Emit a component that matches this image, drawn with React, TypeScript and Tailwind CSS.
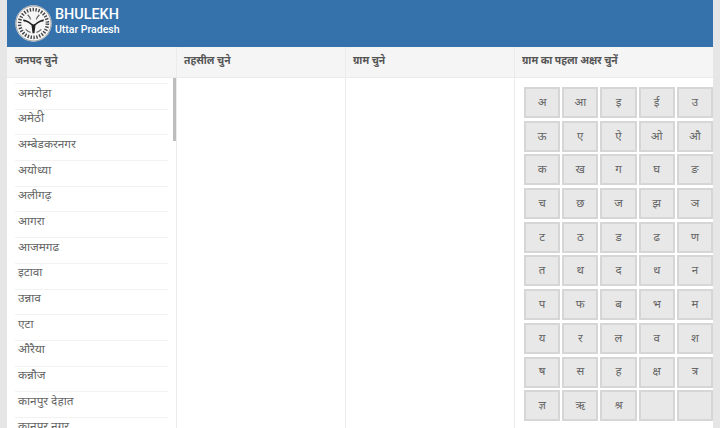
const districts = ["अमरोहा","अमेठी","अम्बेडकरनगर","अयोध्या","अलीगढ़","आगरा","आजमगढ","इटावा","उन्नाव","एटा","औरैया","कन्नौज","कानपुर देहात","कानपुर नगर"];
const letters = ["अ","आ","इ","ई","उ","ऊ","ए","ऐ","ओ","औ","क","ख","ग","घ","ङ","च","छ","ज","झ","ञ","ट","ठ","ड","ढ","ण","त","थ","द","ध","न","प","फ","ब","भ","म","य","र","ल","व","श","ष","स","ह","क्ष","त्र","ज्ञ","ऋ","श्र","",""];

function Emblem() {
  return (
    <svg width="37" height="37" viewBox="0 0 38 38" className="shrink-0">
      <circle cx="19" cy="19" r="18.7" fill="#f6f6f6" />
      <circle cx="19" cy="19" r="18" fill="none" stroke="#777" strokeWidth="0.7" />
      <circle cx="19" cy="19" r="14.3" fill="none" stroke="#444" strokeWidth="3.6" strokeDasharray="1.4 1.6" />
      <circle cx="19" cy="19" r="11.5" fill="#f6f6f6" />
      <path d="M8 15c3 0 7 2 9 4l2 1 2-1c2-2 6-4 9-4l-1 2c-3 0-6 2-8 4l-1 8h-2l-1-8c-2-2-5-4-8-4z" fill="#222" />
      <path d="M13 10c2 2 3 3 3 5M25 10c-2 2-3 3-3 5M11 25c2 2 3 3 5 3M27 25c-2 2-3 3-5 3" stroke="#666" strokeWidth="1.3" fill="none" />
    </svg>
  );
}

function ColHead({ label, first }: { label: string; first?: boolean }) {
  return (
    <div className={`flex h-[31px] items-center border-b border-[#ebebeb] bg-[#f5f5f5] pb-[2px] text-[10.3px] font-bold text-[#555] ${first ? "pl-2" : "pl-[7px]"}`}>
      {label}
    </div>
  );
}

export default function App() {
  return (
    <div className="h-[428px] w-[720px] overflow-hidden bg-[#e6e6e6] px-[7px] font-['Roboto','Noto_Sans',sans-serif]">
      <header className="flex h-[47px] items-center gap-[3px] bg-[#3572ab] pb-[1px] pl-[8px] text-white">
        <Emblem />
        <div className="flex flex-col pb-[4px]">
          <span className="text-[14.4px] leading-[16px] font-medium">BHULEKH</span>
          <span className="text-[10.5px] leading-[13px] font-medium">Uttar Pradesh</span>
        </div>
      </header>
      <div className="flex h-[381px] bg-white">
        <div className="flex w-[170px] shrink-0 flex-col border-r border-[#ebebeb]">
          <ColHead label="जनपद चुने" first />
          <div className="relative flex-1 overflow-hidden pt-[5px] pr-[8px] pl-[8px]">
            <div className="absolute top-[-2px] right-0 h-[65px] w-[3px] bg-[#bdbdbd]" />
            {districts.map((d) => (
              <div key={d} className="flex h-[25.7px] items-center border-t border-[#f2f2f2] pb-[6px] pl-[3px] text-[11.8px] text-[#666]">
                {d}
              </div>
            ))}
          </div>
        </div>
        <div className="flex w-[169px] shrink-0 flex-col border-r border-[#ebebeb]">
          <ColHead label="तहसील चुने" />
        </div>
        <div className="flex w-[169px] shrink-0 flex-col border-r border-[#ebebeb]">
          <ColHead label="ग्राम चुने" />
        </div>
        <div className="flex min-w-0 flex-1 flex-col">
          <ColHead label="ग्राम का पहला अक्षर चुनें" />
          <div className="grid grid-cols-5 gap-x-[2px] gap-y-[2.7px] pt-[9px] pl-[9px]">
            {letters.map((l, i) => (
              <div key={i} className="flex h-[31px] items-center justify-center border-2 border-[#d6d6d6] bg-[#e8e8e8] text-[11.5px] text-[#666]">
                {l}
              </div>
            ))}
          </div>
        </div>
      </div>
    </div>
  );
}
